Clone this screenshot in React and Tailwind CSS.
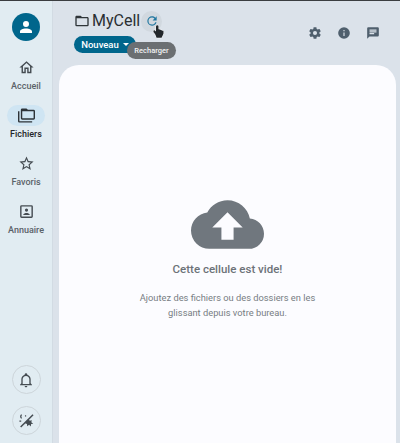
import React from 'react';

// mdi icon paths
const icons = {
  account: 'M12,4A4,4 0 0,1 16,8A4,4 0 0,1 12,12A4,4 0 0,1 8,8A4,4 0 0,1 12,4M12,14C16.42,14 20,15.79 20,18V20H4V18C4,15.79 7.58,14 12,14Z',
  home: 'M12 5.69L17 10.19V18H15V12H9V18H7V10.19L12 5.69M12 3L2 12H5V20H11V14H13V20H19V12H22L12 3Z',
  folders: 'M22,4A2,2 0 0,1 24,6V16A2,2 0 0,1 22,18H6A2,2 0 0,1 4,16V4A2,2 0 0,1 6,2H12L14,4H22M2,6V20H20V22H2A2,2 0 0,1 0,20V11H0V6H2M6,6V16H22V6H6Z',
  star: 'M12,15.39L8.24,17.66L9.23,13.38L5.91,10.5L10.29,10.13L12,6.09L13.71,10.13L18.09,10.5L14.77,13.38L15.76,17.66M22,9.24L14.81,8.63L12,2L9.19,8.63L2,9.24L7.45,13.97L5.82,21L12,17.27L18.18,21L16.54,13.97L22,9.24Z',
  contact: 'M19,19H5V5H19M19,3H5A2,2 0 0,0 3,5V19A2,2 0 0,0 5,21H19A2,2 0 0,0 21,19V5A2,2 0 0,0 19,3M16.5,16.25C16.5,14.75 13.5,14 12,14C10.5,14 7.5,14.75 7.5,16.25V17H16.5M12,12.25A2.25,2.25 0 0,0 14.25,10A2.25,2.25 0 0,0 12,7.75A2.25,2.25 0 0,0 9.75,10A2.25,2.25 0 0,0 12,12.25Z',
  bell: 'M10 21H14C14 22.1 13.1 23 12 23S10 22.1 10 21M21 19V20H3V19L5 17V11C5 7.9 7 5.2 10 4.3V4C10 2.9 10.9 2 12 2S14 2.9 14 4V4.3C17 5.2 19 7.9 19 11V17L21 19M17 11C17 8.2 14.8 6 12 6S7 8.2 7 11V18H17V11Z',
  cog: 'M12,15.5A3.5,3.5 0 0,1 8.5,12A3.5,3.5 0 0,1 12,8.5A3.5,3.5 0 0,1 15.5,12A3.5,3.5 0 0,1 12,15.5M19.43,12.97C19.47,12.65 19.5,12.33 19.5,12C19.5,11.67 19.47,11.34 19.43,11L21.54,9.37C21.73,9.22 21.78,8.95 21.66,8.73L19.66,5.27C19.54,5.05 19.27,4.96 19.05,5.05L16.56,6.05C16.04,5.66 15.5,5.32 14.87,5.07L14.5,2.42C14.46,2.18 14.25,2 14,2H10C9.75,2 9.54,2.18 9.5,2.42L9.13,5.07C8.5,5.32 7.96,5.66 7.44,6.05L4.95,5.05C4.73,4.96 4.46,5.05 4.34,5.27L2.34,8.73C2.21,8.95 2.27,9.22 2.46,9.37L4.57,11C4.53,11.34 4.5,11.67 4.5,12C4.5,12.33 4.53,12.65 4.57,12.97L2.46,14.63C2.27,14.78 2.21,15.05 2.34,15.27L4.34,18.73C4.46,18.95 4.73,19.03 4.95,18.95L7.44,17.94C7.96,18.34 8.5,18.68 9.13,18.93L9.5,21.58C9.54,21.82 9.75,22 10,22H14C14.25,22 14.46,21.82 14.5,21.58L14.87,18.93C15.5,18.67 16.04,18.34 16.56,17.94L19.05,18.95C19.27,19.03 19.54,18.95 19.66,18.73L21.66,15.27C21.78,15.05 21.73,14.78 21.54,14.63L19.43,12.97Z',
  info: 'M13,9H11V7H13M13,17H11V11H13M12,2A10,10 0 0,0 2,12A10,10 0 0,0 12,22A10,10 0 0,0 22,12A10,10 0 0,0 12,2Z',
  message: 'M20,2H4A2,2 0 0,0 2,4V22L6,18H20A2,2 0 0,0 22,16V4C22,2.89 21.1,2 20,2M6,9H18V11H6M14,14H6V12H14M18,8H6V6H18',
  refresh: 'M17.65,6.35C16.2,4.9 14.21,4 12,4A8,8 0 0,0 4,12A8,8 0 0,0 12,20C15.73,20 18.84,17.45 19.73,14H17.65C16.83,16.33 14.61,18 12,18A6,6 0 0,1 6,12A6,6 0 0,1 12,6C13.66,6 15.14,6.69 16.22,7.78L13,11H20V4L17.65,6.35Z',
  folder: 'M20,18H4V8H20M20,6H12L10,4H4C2.89,4 2,4.89 2,6V18A2,2 0 0,0 4,20H20A2,2 0 0,0 22,18V8C22,6.89 21.1,6 20,6Z',
  cloud: 'M14,13V17H10V13H7L12,8L17,13M19.35,10.03C18.67,6.59 15.64,4 12,4C9.11,4 6.6,5.64 5.35,8.03C2.34,8.36 0,10.9 0,14A6,6 0 0,0 6,20H19A5,5 0 0,0 24,15C24,12.36 21.95,10.22 19.35,10.03Z',
  pointer: 'M10,2A2,2 0 0,1 12,4V8.5C12,8.5 14,8.25 14,9.25C14,9.25 16,9 16,10C16,10 18,9.75 18,10.75C18,10.75 20,10.5 20,11.5V15C20,16 17,21 17,22H9C9,22 7,15 4,13C4,13 3,7 8,12V4A2,2 0 0,1 10,2Z',
};

function Icon({ name, className }) {
  return (
    <svg viewBox="0 0 24 24" fill="currentColor" className={className}>
      <path d={icons[name]} />
    </svg>
  );
}

const navItems = [
  { icon: 'home', label: 'Accueil' },
  { icon: 'folders', label: 'Fichiers', active: true },
  { icon: 'star', label: 'Favoris' },
  { icon: 'contact', label: 'Annuaire' },
];

function NavItem({ icon, label, active }) {
  return (
    <div className="flex h-12 flex-col items-center">
      <div className={`flex h-[21px] w-[38px] items-center justify-center rounded-full ${active ? 'bg-[#cfe5f3]' : ''}`}>
        <Icon name={icon} className={`h-[17px] w-[17px] ${active ? 'text-[#2d3338]' : 'text-[#454c52]'}`} />
      </div>
      <span className={`mt-[1px] text-[9px] leading-[14px] font-medium ${active ? 'text-[#1f2529]' : 'text-[#5a6268]'}`}>{label}</span>
    </div>
  );
}

function Sidebar() {
  return (
    <div className="flex h-full w-[53px] shrink-0 flex-col items-center border-r border-[#d2dbe3] bg-[#e1ecf2] pb-[8px]">
      <div className="mt-[12px] flex h-7 w-7 items-center justify-center rounded-full bg-[#00668c] text-white">
        <Icon name="account" className="h-[18px] w-[18px]" />
      </div>
      <div className="mt-[16px] flex flex-col">
        {navItems.map(item => (
          <NavItem key={item.label} {...item} />
        ))}
      </div>
      <div className="mt-auto flex flex-col gap-3">
        <div className="flex h-[29px] w-[29px] items-center justify-center rounded-full border border-[#cdd5da]">
          <Icon name="bell" className="h-[16px] w-[16px] text-[#454c52]" />
        </div>
        <div className="flex h-[29px] w-[29px] items-center justify-center rounded-full border border-[#cdd5da]">
          {/* wand with a slash, no exact mdi match */}
          <svg viewBox="0 0 24 24" className="h-[17px] w-[17px] text-[#454c52]" fill="currentColor">
            <path d="M3 20.500 20.500 3l1.500 1.500L4.500 22z" />
            <path d="M11 14l4-4 1.500 2.500 3-1-.7 3 2.700 2-3 .5-.5 3.500-2.300-2.500-2.700 2-.3-3-2.700-1z" />
            <path d="M4.500 3c-2 1.800-2 4.700 0 6.500l1.200-1.200c-1.200-1.100-1.200-3 0-4.100zM9.500 5.500l1.200-1.200 1.200 1.200-1.200 1.200zM2 12h2.500v1.700H2z" />
          </svg>
        </div>
      </div>
    </div>
  );
}

function Header() {
  return (
    <div className="flex h-[64px] shrink-0 items-start justify-between pr-[19px] pl-[21px]">
      <div className="flex flex-col items-start">
        <div className="mt-[7px] flex h-[26px] items-center">
          <Icon name="folder" className="h-[16px] w-[16px] text-[#2f3539]" />
          <span className="ml-[2px] text-[16px] leading-[26px] text-[#2a2f33]">MyCell</span>
          <div className="relative ml-[1px] flex h-[21px] w-[21px] items-center justify-center rounded-full bg-[#d1d8df]">
            <Icon name="refresh" className="h-[14px] w-[14px] text-[#1f76a0]" />
            <Icon name="pointer" className="absolute top-[13px] left-[10px] h-[15px] w-[15px] text-[#22272b] [paint-order:stroke] [stroke:#fff] [stroke-width:1.5px]" />
          </div>
        </div>
        <div className="relative mt-[2px] flex h-[17px] w-[62px] items-center justify-center gap-[4px] rounded-full bg-[#00668c] text-white">
          <span className="text-[9.5px] leading-none font-medium">Nouveau</span>
          <span className="h-0 w-0 border-x-[3px] border-t-[3px] border-x-transparent border-t-white"></span>
          <div className="absolute top-[6px] left-[53px] flex h-[17px] w-[49px] items-center justify-center rounded-full bg-[#6b6f72] text-[7.5px] leading-none font-medium text-[#f1f2f3]">
            Recharger
          </div>
        </div>
      </div>
      <div className="mt-[25px] mr-[1px] flex items-center gap-[15px] text-[#4f5f6d]">
        <Icon name="cog" className="h-[14px] w-[14px]" />
        <Icon name="info" className="h-[14px] w-[14px]" />
        <Icon name="message" className="h-[14px] w-[14px]" />
      </div>
    </div>
  );
}

function EmptyCard() {
  return (
    <div className="mr-[4px] ml-[6px] flex flex-1 flex-col items-center rounded-t-[20px] bg-[#fcfcff]">
      <Icon name="cloud" className="mt-[123px] h-[73px] w-[73px] text-[#70777e]" />
      <div className="text-[11.5px] leading-[16px] font-medium text-[#6c7278]">Cette cellule est vide!</div>
      <div className="mt-[13px] w-[200px] text-center text-[9.3px] leading-[15px] text-[#777d83]">
        Ajoutez des fichiers ou des dossiers en les glissant depuis votre bureau.
      </div>
    </div>
  );
}

export default function App() {
  return (
    <div className="flex h-[443px] w-[400px] flex-col overflow-hidden bg-[#dbe2ea] font-['Roboto',sans-serif]">
      <div className="h-px shrink-0 bg-[#3a3d40]"></div>
      <div className="flex min-h-0 flex-1">
        <Sidebar />
        <div className="flex min-w-0 flex-1 flex-col">
          <Header />
          <EmptyCard />
        </div>
      </div>
    </div>
  );
}
